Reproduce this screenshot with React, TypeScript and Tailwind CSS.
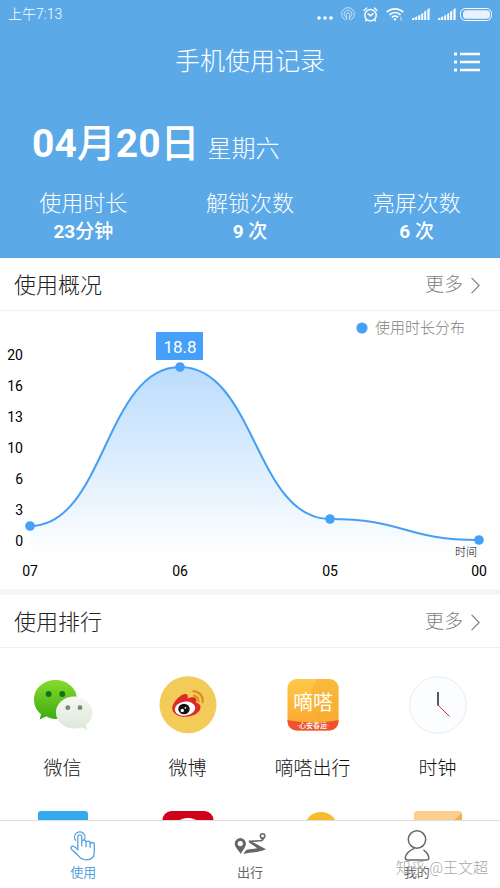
import type { ReactNode } from "react";

interface Stat {
    label: string;
    value: string;
    unit: string;
}

interface ChartPoint {
    hour: string;
    x: number;
    y: number;
}

interface AppEntry {
    name: string;
    icon: ReactNode;
}

interface Tab {
    label: string;
    icon: ReactNode;
    active?: boolean;
}

const stats: Stat[] = [
    { label: "使用时长", value: "23", unit: "分钟" },
    { label: "解锁次数", value: "9 ", unit: "次" },
    { label: "亮屏次数", value: "6 ", unit: "次" },
];

const yTicks = [20, 16, 13, 10, 6, 3, 0];

const points: ChartPoint[] = [
    { hour: "07", x: 30, y: 215 },
    { hour: "06", x: 180, y: 56 },
    { hour: "05", x: 330, y: 208 },
    { hour: "00", x: 479, y: 229 },
];

/** Joins the points with horizontal tangents, so the line never overshoots a value. */
function smoothPath(list: ChartPoint[]): string {
    return list
        .map((p, i) => {
            if (i === 0) return `M${p.x} ${p.y}`;
            const prev = list[i - 1];
            const mid = (prev.x + p.x) / 2;
            return `C${mid} ${prev.y} ${mid} ${p.y} ${p.x} ${p.y}`;
        })
        .join("");
}

function StatusBar() {
    return (
        <div className="flex h-7 items-center justify-between px-2 text-white">
            <span className="text-sm font-light">上午7:13</span>
            <div className="flex items-center gap-2">
                <svg width="16" height="14" viewBox="0 0 16 14" fill="currentColor">
                    <circle cx="2" cy="11" r="1.8" />
                    <circle cx="8" cy="11" r="1.8" />
                    <circle cx="14" cy="11" r="1.8" />
                </svg>
                <svg width="14" height="14" viewBox="0 0 14 14" fill="none" stroke="currentColor" opacity="0.65">
                    <path d="M4.2 12.8a6.4 6.4 0 1 1 5.6 0" />
                    <path d="M5 10.4a3.9 3.9 0 1 1 4 0" />
                    <path d="M5.6 13.2V8.6a1.8 1.8 0 1 1 2.8 0v4.6" />
                </svg>
                <svg width="15" height="15" viewBox="0 0 15 15" fill="none" stroke="currentColor" strokeWidth="1.4" strokeLinecap="round">
                    <circle cx="7.5" cy="8.2" r="5.7" />
                    <path d="M1 3.4 3.6 1M14 3.4 11.4 1M5 6.8l2.5 2 2.6-2.2M3.4 12.6l-.9 1.2M11.6 12.6l.9 1.2" />
                </svg>
                <svg width="18" height="14" viewBox="0 0 18 14" fill="none" stroke="currentColor" strokeWidth="1.7">
                    <path d="M.8 5.2a11.6 11.6 0 0 1 16.4 0M3.4 7.8a8 8 0 0 1 11.2 0M6 10.3a4.3 4.3 0 0 1 6 0" />
                    <circle cx="9" cy="12.2" r="1.2" fill="currentColor" stroke="none" />
                    <path d="M15 9.8v4" strokeWidth="1" opacity="0.7" />
                </svg>
                <SignalIcon />
                <SignalIcon />
                <svg width="32" height="13" viewBox="0 0 32 13" fill="none" className="-ml-1">
                    <rect x="0.5" y="0.5" width="31" height="12" rx="5" stroke="currentColor" />
                    <rect x="3" y="2.2" width="27" height="8.6" rx="3.5" fill="currentColor" opacity="0.85" />
                </svg>
            </div>
        </div>
    );
}

function SignalIcon() {
    return (
        <svg width="18" height="12" viewBox="0 0 18 12" fill="currentColor">
            <path d="M0 12v-1.4L2.4 9.6V12zM3.2 12V9.2l2-.9V12zM6.2 12V7.8l2-1V12zM9.2 12V6l2-1.3V12zM12.2 12V3.8l2-1.4V12zM15.4 12V1.6L17.6 0v12z" />
        </svg>
    );
}

function SectionHeader({ title }: { title: string }) {
    return (
        <div className="flex h-[53px] items-center justify-between border-b border-[#f0f0f0] pt-0.5 pr-5 pl-3.5">
            <h2 className="text-[22px] font-light text-[#222]">{title}</h2>
            <a href="#more" className="flex items-center gap-2 text-[19px] font-light text-[#808080]">
                更多
                <svg width="9" height="17" viewBox="0 0 9 17" fill="none" stroke="currentColor" strokeWidth="1.2">
                    <path d="M.6.8 8.2 8.5.6 16.2" />
                </svg>
            </a>
        </div>
    );
}

function UsageChart() {
    const line = smoothPath(points);
    const first = points[0];
    const last = points[points.length - 1];

    return (
        <svg viewBox="0 0 500 278" className="block w-full" role="img" aria-label="使用时长分布">
            <defs>
                <linearGradient id="usage-fill" x1="0" y1="56" x2="0" y2="246" gradientUnits="userSpaceOnUse">
                    <stop offset="0" stopColor="#bbdcfc" />
                    <stop offset="1" stopColor="#ffffff" />
                </linearGradient>
            </defs>

            <circle cx="362" cy="17" r="5.6" fill="#45a0fa" />
            <text x="375" y="22" className="fill-[#808080] text-[15px] font-light">使用时长分布</text>

            {yTicks.map((tick, i) => (
                <text key={tick} x="23" y={49 + i * 31} textAnchor="end" className="text-sm">{tick}</text>
            ))}

            <path d={`${line}V246H${first.x}Z`} fill="url(#usage-fill)" />
            <path d={line} fill="none" stroke="#459ff2" strokeWidth="2" />
            {points.map((p) => (
                <g key={p.hour}>
                    <circle cx={p.x} cy={p.y} r="4.8" fill="#45a0fa" />
                    <text x={p.x} y="265" textAnchor="middle" className="text-sm">{p.hour}</text>
                </g>
            ))}

            <rect x="156" y="21" width="47" height="28" fill="#45a0fa" />
            <text x="180" y="42" textAnchor="middle" className="fill-white text-[17px]">18.8</text>
            <text x={last.x - 2} y="245" textAnchor="end" className="text-[11px] font-light">时间</text>
        </svg>
    );
}

function WechatIcon() {
    return (
        <svg width="60" height="58" viewBox="0 0 60 58">
            <defs>
                <linearGradient id="wechat-green" x1="0" y1="0" x2="0" y2="1">
                    <stop offset="0" stopColor="#84dc2c" />
                    <stop offset="1" stopColor="#3eab12" />
                </linearGradient>
                <linearGradient id="wechat-white" x1="0" y1="0" x2="0" y2="1">
                    <stop offset="0" stopColor="#f5f8f3" />
                    <stop offset="1" stopColor="#dce8d8" />
                </linearGradient>
            </defs>
            <path d="M22.5 4C10.5 4 1 12.5 1 23.5c0 6 2.500 11 7 14.600L6.700 43.500l6.800-3.300c2.800 1.800 5.800 2.800 9 2.800 12 0 21.500-8.500 21.500-19.500S34.500 4 22.500 4z" fill="url(#wechat-green)" />
            <circle cx="15.6" cy="18" r="2.9" fill="#147019" />
            <circle cx="29.3" cy="18" r="2.9" fill="#147019" />
            <path d="M41.2 20.500c-10.200 0-18.300 7-18.300 16s8.100 16 18.300 16c2.600 0 5-.4 7.300-1.300l5.700 2.800-1.200-5.200c4-3 6.500-7.400 6.500-12.300 0-9-8.100-16-18.300-16z" fill="url(#wechat-white)" />
            <circle cx="34.8" cy="31.7" r="2.4" fill="#788a72" />
            <circle cx="47" cy="31.7" r="2.4" fill="#788a72" />
        </svg>
    );
}

function WeiboIcon() {
    return (
        <svg width="60" height="58" viewBox="0 0 60 58">
            <circle cx="30" cy="28.7" r="28.5" fill="#f2cb58" />
            <path d="M14.200 32.500c-.3-5.500 8.200-14.300 12.800-14.500 2.800-.1 3.300 2.300 2.500 4.500 2.700-1.300 8-2.300 8.800.7.300 1.200 0 2.300-.4 3.300 2.800.7 4.900 2.300 4.600 5-.6 5.300-7.500 9.300-15.300 9.300-7.200 0-12.700-3.600-13-8.300z" fill="#da2b2a" />
            <ellipse cx="27" cy="32.6" rx="10.3" ry="7" fill="#fff" transform="rotate(-8 27 32.6)" />
            <ellipse cx="26" cy="33" rx="5.7" ry="5.3" fill="#111" />
            <circle cx="24.3" cy="34.5" r="1.7" fill="#fff" />
            <circle cx="27.4" cy="31.8" r="0.9" fill="#fff" />
            <path d="M35.300 15.200a9.300 9.300 0 0 1 9.300 11M36 19.800a5 5 0 0 1 4.500 5.800" fill="none" stroke="#e08a1c" strokeWidth="2" strokeLinecap="round" />
        </svg>
    );
}

function DidaIcon() {
    return (
        <svg width="60" height="58" viewBox="0 0 60 58">
            <defs>
                <linearGradient id="dida-bg" x1="0" y1="0" x2="0" y2="1">
                    <stop offset="0" stopColor="#fdc94a" />
                    <stop offset="1" stopColor="#f8a42c" />
                </linearGradient>
                <clipPath id="dida-clip">
                    <rect x="4.5" y="3" width="51" height="51.5" rx="9" />
                </clipPath>
            </defs>
            <g clipPath="url(#dida-clip)">
                <rect x="4" y="3" width="52" height="52" fill="url(#dida-bg)" />
                <path d="M34 3c-8 12-8 28 2 43h20V3z" fill="#f7ab2d" opacity="0.5" />
                <path d="M4 44c15 3.300 37 3.300 52 0V55H4z" fill="#f0512f" />
            </g>
            <text x="30" y="34" textAnchor="middle" className="fill-white text-[20px]">嘀嗒</text>
            <text x="30" y="52" textAnchor="middle" className="fill-white text-[7px] font-medium">·心安春运·</text>
        </svg>
    );
}

function ClockIcon() {
    return (
        <svg width="60" height="58" viewBox="0 0 60 58" fill="none">
            <circle cx="30" cy="29" r="28.3" fill="#fbfdff" stroke="#e6edf5" />
            <path d="M30 29l11.500 11.500" stroke="#c9304a" />
            <path d="M30 16v13.500" stroke="#222" strokeWidth="1.5" />
        </svg>
    );
}

const apps: AppEntry[] = [
    { name: "微信", icon: <WechatIcon /> },
    { name: "微博", icon: <WeiboIcon /> },
    { name: "嘀嗒出行", icon: <DidaIcon /> },
    { name: "时钟", icon: <ClockIcon /> },
];

// The next row only peeks out above the tab bar.
const nextIcons: ReactNode[] = [
    <svg width="60" height="58" viewBox="0 0 60 58">
        <rect x="5" y="3" width="50" height="50" rx="3" fill="#35a9ee" />
    </svg>,
    <svg width="60" height="58" viewBox="0 0 60 58">
        <rect x="4.5" y="3" width="51" height="51" rx="9" fill="#d0021b" />
        <circle cx="30" cy="27" r="17" fill="#fff" />
    </svg>,
    <svg width="60" height="58" viewBox="0 0 60 58">
        <circle cx="38" cy="21" r="17" fill="#f8bd2c" />
    </svg>,
    <svg width="60" height="58" viewBox="0 0 60 58">
        <rect x="6" y="3" width="48" height="50" rx="3" fill="#fccf8d" />
        <path d="M54 5v8H45z" fill="#f5ae55" />
    </svg>,
];

const tabs: Tab[] = [
    {
        label: "使用",
        active: true,
        icon: (
            <svg width="30" height="30" viewBox="0 0 30 30" fill="none" stroke="currentColor" strokeWidth="1.3" strokeLinecap="round" strokeLinejoin="round">
                <path d="M7.600 9.300a5.200 5.200 0 1 1 8.400-.2" />
                <path d="M9.800 19V5.800a2 2 0 0 1 4 0V15M13.800 11.200a2 2 0 0 1 4.200 0v4.600M18 12a2 2 0 0 1 4.100.3v4M22.100 13.400a2.100 2.100 0 0 1 4.200.4v7.400c0 5-3 7.600-7.600 7.600-4 0-6-1-8-3.600-1.700-2.300-4.200-4.200-6.600-6.200-2.200-2-1-4.400 1.400-3.700 1.700.5 3 1.700 4.300 3.200" />
            </svg>
        ),
    },
    {
        label: "出行",
        icon: (
            <svg width="32" height="30" viewBox="0 0 32 30" fill="currentColor">
                <path fillRule="evenodd" d="M6.300 7a5.600 5.600 0 0 0-5.600 5.600c0 3.800 4 6.600 6 10.400 2-3.800 5.200-6.600 5.200-10.400A5.600 5.600 0 0 0 6.300 7zm0 3a2.600 2.600 0 1 1 0 5.200 2.600 2.600 0 0 1 0-5.200z" />
                <path d="M28.600 9 14.600 9.600l.4 1.800 8.300 5.800-9.500 1.400c-2.200.5-3.300 2.400-4.300 4.400 7.500-1.800 15-1.300 22.500-4.800L18.500 11l10.100-.8z" />
                <path fillRule="evenodd" d="M28.600 2a3 3 0 0 0-3 3c0 2 1.900 2.800 2.600 4.700h.8c.7-1.900 2.600-2.700 2.600-4.700a3 3 0 0 0-3-3zm0 1.600a1.400 1.400 0 1 1 0 2.800 1.400 1.400 0 0 1 0-2.800z" />
            </svg>
        ),
    },
    {
        label: "我的",
        icon: (
            <svg width="30" height="32" viewBox="0 0 30 32" fill="none" stroke="currentColor" strokeWidth="1.5" strokeLinecap="round">
                <circle cx="15" cy="9.5" r="8.7" />
                <path d="M12 18.600c-5 1.800-8.700 6-8.700 9.200 0 1.600.8 2.200 2.300 2.200h19c1.600 0 2.400-.7 2.200-2.300-.4-3-2.200-5.600-4.800-7.400" />
            </svg>
        ),
    },
];

function AppTile({ name, icon }: AppEntry) {
    return (
        <li className="flex flex-col items-center gap-[22px]">
            {icon}
            <span className="text-[19px] leading-[26px] font-light text-[#111]">{name}</span>
        </li>
    );
}

function TabBar() {
    return (
        <nav className="relative grid shrink-0 grid-cols-3 border-t border-[#dcdcdc] bg-white pb-1">
            {tabs.map(({ label, icon, active }) => (
                <button
                    key={label}
                    type="button"
                    className={`flex flex-col items-center ${active ? "text-[#56a3da]" : "text-[#666]"}`}
                >
                    <span className="flex h-[41px] items-center pt-2">{icon}</span>
                    <span className="text-[13px] leading-[22px]">{label}</span>
                </button>
            ))}
            <span className="pointer-events-none absolute right-3 bottom-2 text-[15px] leading-6 font-light text-[#a8a8a8]">知乎 @王文超</span>
        </nav>
    );
}

export default function App() {
    return (
        <div className="flex h-screen flex-col bg-white font-['Roboto','Noto_Sans_CJK_SC',sans-serif] text-black">
            <header className="shrink-0 bg-[#5ca9e8] text-white">
                <StatusBar />
                <div className="grid h-17 grid-cols-[1fr_auto_1fr] items-center px-5">
                    <h1 className="col-start-2 text-[25px] font-light">手机使用记录</h1>
                    <button type="button" aria-label="列表" className="justify-self-end">
                        <svg width="26" height="20" viewBox="0 0 26 20" fill="currentColor">
                            <path d="M0 .5h3v3H0zM6 .7h20v2.600H6zM0 8.500h3v3H0zM6 8.700h20v2.600H6zM0 16.500h3v3H0zM6 16.700h20v2.600H6z" />
                        </svg>
                    </button>
                </div>
                <div className="mt-6 flex h-12 items-baseline gap-2 px-8 leading-[48px]">
                    <span className="text-[39px] font-bold">
                        04<span className="font-medium">月</span>20<span className="font-medium">日</span>
                    </span>
                    <span className="text-2xl leading-[48px] font-light">星期六</span>
                </div>
                <dl className="mt-5 grid grid-cols-3 pb-3.5 text-center">
                    {stats.map(({ label, value, unit }) => (
                        <div key={label}>
                            <dt className="text-[22px] leading-8 font-light">{label}</dt>
                            <dd className="text-[19px] leading-6 font-bold">
                                {value}
                                <span className="font-medium">{unit}</span>
                            </dd>
                        </div>
                    ))}
                </dl>
            </header>

            <main className="min-h-0 flex-1 overflow-hidden">
                <section className="border-b-6 border-[#f5f5f5]">
                    <SectionHeader title="使用概况" />
                    <UsageChart />
                </section>
                <section>
                    <SectionHeader title="使用排行" />
                    <ul className="grid grid-cols-4 gap-y-[26px] pt-7">
                        {apps.map((app) => (
                            <AppTile key={app.name} {...app} />
                        ))}
                        {nextIcons.map((icon, i) => (
                            <li key={i} className="flex justify-center">{icon}</li>
                        ))}
                    </ul>
                </section>
            </main>

            <TabBar />
        </div>
    );
}
